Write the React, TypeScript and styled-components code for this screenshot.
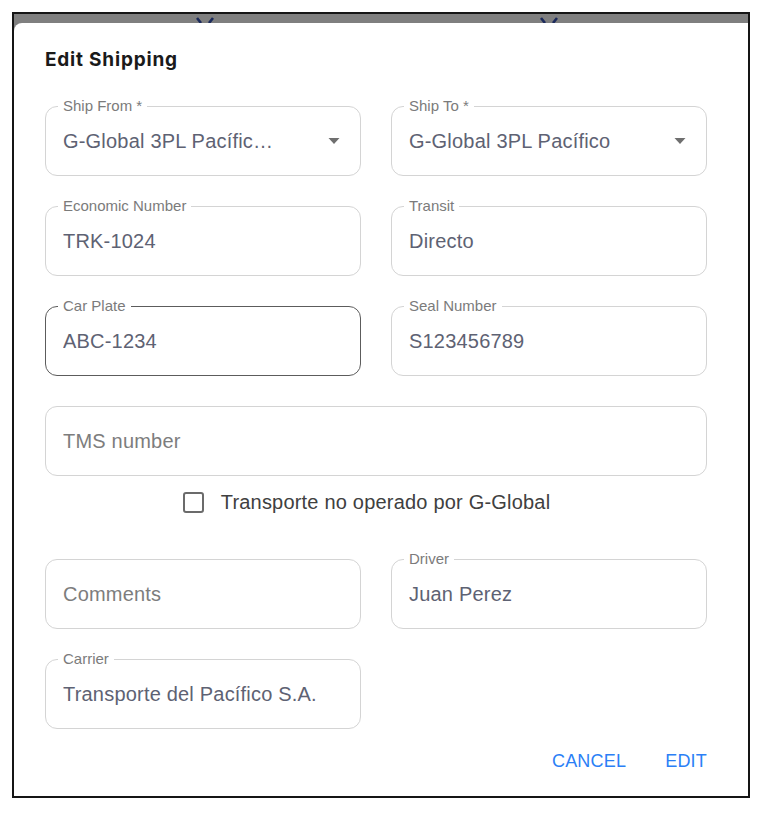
import React from "react";
import styled, { createGlobalStyle } from "styled-components";

const Global = createGlobalStyle`
  html, body { margin: 0; padding: 0; background: #ffffff; }
  body { font-family: "Liberation Sans", Arial, sans-serif; }
  * { box-sizing: border-box; }
`;

const Page = styled.div`
  padding: 12px 0 0 12px;
`;

const Frame = styled.div`
  width: 738px;
  height: 786px;
  border: 2px solid #151515;
  background: #7f7f7f;
  display: flex;
  flex-direction: column;
  overflow: hidden;
`;

const Backdrop = styled.div`
  height: 9px;
  flex: none;
  display: flex;
  align-items: flex-start;
  gap: 326px;
  padding-left: 182px;
  overflow: hidden;
`;

const Dialog = styled.div`
  flex: 1;
  background: #ffffff;
  border-top-left-radius: 8px;
  padding: 25px 0 0 31px;
  display: flex;
  flex-direction: column;
`;

const Title = styled.h2`
  margin: 0;
  font-family: Inter, "Liberation Sans", sans-serif;
  font-size: 19px;
  line-height: 24px;
  font-weight: 700;
  color: #1a1a1a;
  letter-spacing: 0.8px;
`;

const Grid = styled.div<{ $top: number }>`
  display: grid;
  grid-template-columns: 316px 316px;
  column-gap: 30px;
  row-gap: 30px;
  margin-top: ${(p) => p.$top}px;
  width: 662px;
`;

const FieldBox = styled.div<{ $active?: boolean; $span?: boolean }>`
  position: relative;
  height: 70px;
  border: 1px solid ${(p) => (p.$active ? "#5c5c5c" : "#d4d4d4")};
  border-radius: 12px;
  display: flex;
  align-items: center;
  padding: 0 20px 0 17px;
  grid-column: ${(p) => (p.$span ? "1 / -1" : "auto")};
`;

const Label = styled.span`
  position: absolute;
  top: -10px;
  left: 12px;
  padding: 0 5px;
  background: #ffffff;
  font-size: 15px;
  line-height: 18px;
  color: #7b7b7b;
  white-space: nowrap;
`;

const Value = styled.span<{ $placeholder?: boolean; $max?: number }>`
  font-size: 20px;
  line-height: 24px;
  letter-spacing: 0.2px;
  color: ${(p) => (p.$placeholder ? "#7d7d7d" : "#5e6273")};
  white-space: nowrap;
  overflow: hidden;
  text-overflow: ellipsis;
  max-width: ${(p) => (p.$max ? `${p.$max}px` : "none")};
`;

const Arrow = styled.svg`
  margin-left: auto;
  flex: none;
`;

const CheckRow = styled.label`
  display: flex;
  align-items: center;
  justify-content: center;
  gap: 17px;
  margin: 16px 0 0 0;
  padding-right: 19px;
  width: 662px;
  height: 20px;
  cursor: pointer;
`;

const CheckBox = styled.span`
  width: 21px;
  height: 21px;
  border: 2px solid #6b6b6b;
  border-radius: 3px;
  flex: none;
`;

const CheckText = styled.span`
  font-size: 20px;
  line-height: 24px;
  letter-spacing: 0.2px;
  color: #404040;
`;

const Actions = styled.div`
  display: flex;
  justify-content: flex-end;
  gap: 39px;
  width: 662px;
  margin-top: 14px;
`;

const TextButton = styled.button`
  border: none;
  background: transparent;
  padding: 0;
  height: 36px;
  font-family: "Liberation Sans", Arial, sans-serif;
  font-size: 18px;
  letter-spacing: 0.2px;
  color: #2b7ff6;
  cursor: pointer;
`;

const Chevron = () => (
  <svg width="18" height="9" viewBox="0 0 18 9">
    <path d="M1 4 L5 9 M17 4 L13 9" stroke="#1b2a5c" strokeWidth="2.6" fill="none" />
  </svg>
);

const DropArrow = () => (
  <Arrow width="12" height="6" viewBox="0 0 12 6">
    <path d="M0.5 0 L11.5 0 L6 6 Z" fill="#6f6f6f" />
  </Arrow>
);

type FieldProps = {
  label?: string;
  value: string;
  placeholder?: boolean;
  select?: boolean;
  active?: boolean;
  span?: boolean;
  max?: number;
};

const Field = ({ label, value, placeholder, select, active, span, max }: FieldProps) => (
  <FieldBox $active={active} $span={span}>
    {label && <Label>{label}</Label>}
    <Value $placeholder={placeholder} $max={max}>
      {value}
    </Value>
    {select && <DropArrow />}
  </FieldBox>
);

export default function App() {
  return (
    <>
      <Global />
      <Page>
        <Frame>
          <Backdrop>
            <Chevron />
            <Chevron />
          </Backdrop>
          <Dialog>
            <Title>Edit Shipping</Title>
            <Grid $top={34}>
              <Field label="Ship From *" value="G-Global 3PL Pacífico Norte" select max={218} />
              <Field label="Ship To *" value="G-Global 3PL Pacífico" select />
              <Field label="Economic Number" value="TRK-1024" />
              <Field label="Transit" value="Directo" />
              <Field label="Car Plate" value="ABC-1234" active />
              <Field label="Seal Number" value="S123456789" />
              <Field value="TMS number" placeholder span />
            </Grid>
            <CheckRow>
              <CheckBox />
              <CheckText>Transporte no operado por G-Global</CheckText>
            </CheckRow>
            <Grid $top={47}>
              <Field value="Comments" placeholder />
              <Field label="Driver" value="Juan Perez" />
              <Field label="Carrier" value="Transporte del Pacífico S.A." />
            </Grid>
            <Actions>
              <TextButton>CANCEL</TextButton>
              <TextButton>EDIT</TextButton>
            </Actions>
          </Dialog>
        </Frame>
      </Page>
    </>
  );
}
